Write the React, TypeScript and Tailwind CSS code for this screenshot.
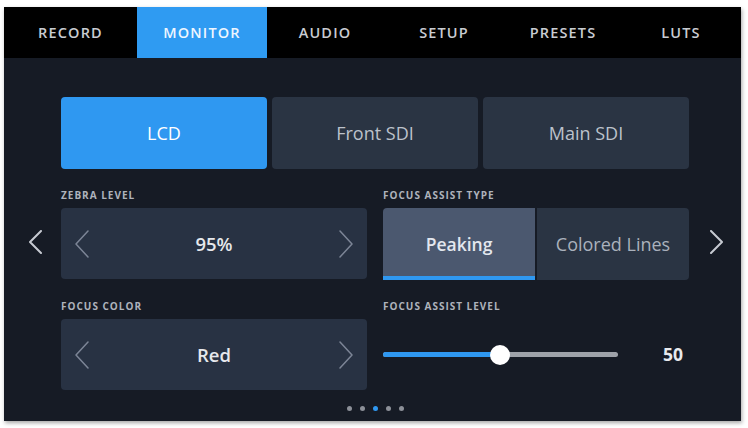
import React from "react";

const Chev = ({ dir, w, h, color, sw = 2 }: { dir: "l" | "r"; w: number; h: number; color: string; sw?: number }) => (
  <svg width={w} height={h} viewBox={`0 0 ${w} ${h}`} fill="none">
    {dir === "l" ? (
      <polyline points={`${w - 1},1 1,${h / 2} ${w - 1},${h - 1}`} stroke={color} strokeWidth={sw} strokeLinecap="round" strokeLinejoin="round" />
    ) : (
      <polyline points={`1,1 ${w - 1},${h / 2} 1,${h - 1}`} stroke={color} strokeWidth={sw} strokeLinecap="round" strokeLinejoin="round" />
    )}
  </svg>
);

const tabs: { label: string; w: string; active?: boolean }[] = [
  { label: "RECORD", w: "w-[133px]" },
  { label: "MONITOR", w: "w-[130px]", active: true },
  { label: "AUDIO", w: "w-[116px]" },
  { label: "SETUP", w: "w-[122px]" },
  { label: "PRESETS", w: "w-[116px]" },
  { label: "LUTS", w: "w-[120px]" },
];

const Label = ({ children }: { children: React.ReactNode }) => (
  <div className="h-[12px] text-[10px] leading-[12px] font-bold tracking-[0.1em] text-[#aeb3bc] mb-[7px]">{children}</div>
);

const Stepper = ({ value }: { value: string }) => (
  <div className="h-[71px] rounded-[4px] bg-[#283243] flex items-center justify-between px-[14px]">
    <Chev dir="l" w={14} h={28} color="#7c8596" sw={1.5} />
    <span className="text-[18.5px] font-semibold text-[#e6e8ec]">{value}</span>
    <Chev dir="r" w={14} h={28} color="#7c8596" sw={1.5} />
  </div>
);

export default function App() {
  return (
    <div className="w-[748px] h-[428px] bg-white pt-[7px] pl-[4px]" style={{ fontFamily: '"Open Sans", "Noto Sans", sans-serif' }}>
      <div className="w-[737px] h-[414px] bg-[#161b25] shadow-[1px_2px_4px_rgba(0,0,0,0.35)] flex flex-col">
        <div className="h-[51px] bg-black flex">
          {tabs.map((t) => (
            <div
              key={t.label}
              className={`${t.w} flex items-center justify-center text-[14.5px] font-semibold tracking-[0.08em] ${t.active ? "bg-[#2f9bf2] text-[#eef6ff]" : "text-[#c9ccd2]"}`}
            >
              {t.label}
            </div>
          ))}
        </div>

        <div className="pt-[39px] pl-[57px]">
          <div className="w-[628px] grid grid-cols-3 gap-[5px] h-[72px]">
            <div className="rounded-[4px] bg-[#2f98f1] flex items-center justify-center text-[18px] text-white">LCD</div>
            <div className="rounded-[4px] bg-[#2a3443] flex items-center justify-center text-[18px] text-[#bcc2cb]">Front SDI</div>
            <div className="rounded-[4px] bg-[#2a3443] flex items-center justify-center text-[18px] text-[#bcc2cb]">Main SDI</div>
          </div>
        </div>

        <div className="flex mt-[20px]">
          <div className="w-[57px] flex items-end justify-center pb-[26px] pl-[6px]">
            <Chev dir="l" w={13} h={24} color="#c6cad1" sw={2} />
          </div>
          <div className="w-[306px]">
            <Label>ZEBRA LEVEL</Label>
            <Stepper value="95%" />
          </div>
          <div className="w-[306px] ml-[16px]">
            <Label>FOCUS ASSIST TYPE</Label>
            <div className="h-[72px] flex gap-[2px]">
              <div className="w-[152px] rounded-l-[4px] bg-[#4b586f] relative flex items-center justify-center text-[17.5px] font-semibold text-[#e3e7ee]">
                Peaking
                <div className="absolute left-0 right-0 bottom-0 h-[4px] bg-[#2f98f1]"></div>
              </div>
              <div className="flex-1 rounded-r-[4px] bg-[#2a3443] flex items-center justify-center text-[18px] text-[#aab1bc]">Colored Lines</div>
            </div>
          </div>
          <div className="w-[52px] flex items-end justify-center pb-[26px] pl-[2px]">
            <Chev dir="r" w={13} h={24} color="#c6cad1" sw={2} />
          </div>
        </div>

        <div className="flex mt-[20px] pl-[57px]">
          <div className="w-[306px]">
            <Label>FOCUS COLOR</Label>
            <Stepper value="Red" />
          </div>
          <div className="w-[306px] ml-[16px]">
            <Label>FOCUS ASSIST LEVEL</Label>
            <div className="h-[71px] flex items-center">
              <div className="w-[235px] h-[5px] rounded-full bg-[#9ea2a9] relative">
                <div className="absolute left-0 top-0 h-[5px] w-[117px] rounded-full bg-[#2f98f1]"></div>
                <div className="absolute left-[107px] top-[-7.5px] w-[20px] h-[20px] rounded-full bg-white"></div>
              </div>
              <span className="ml-[45px] text-[17.5px] font-bold text-[#e8eaee]">50</span>
            </div>
          </div>
        </div>

        <div className="flex justify-center gap-[8px] mt-[16px] pl-[5px]">
          <div className="w-[5px] h-[5px] rounded-full bg-[#8c9098]"></div>
          <div className="w-[5px] h-[5px] rounded-full bg-[#8c9098]"></div>
          <div className="w-[5px] h-[5px] rounded-full bg-[#2f98f1]"></div>
          <div className="w-[5px] h-[5px] rounded-full bg-[#8c9098]"></div>
          <div className="w-[5px] h-[5px] rounded-full bg-[#8c9098]"></div>
        </div>
      </div>
    </div>
  );
}
